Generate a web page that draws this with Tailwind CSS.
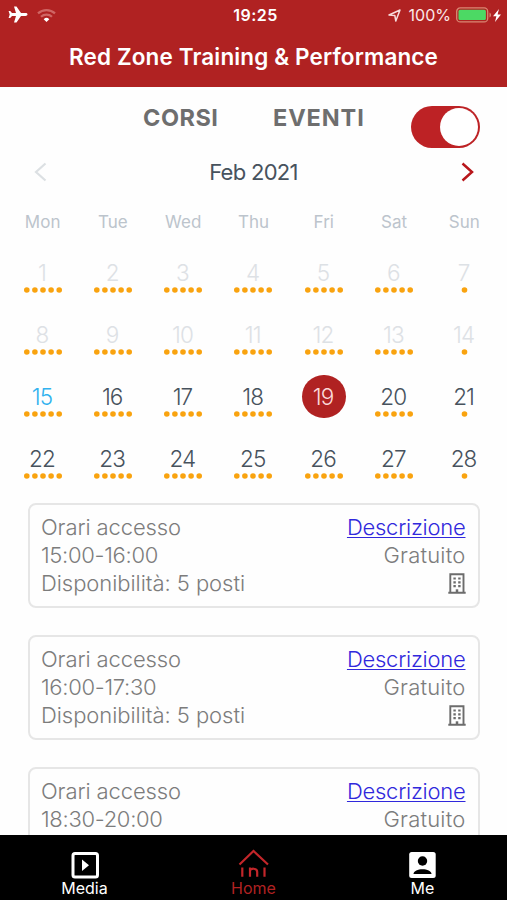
<!DOCTYPE html>
<html lang="it">
<head>
<meta charset="utf-8">
<title>Red Zone Training &amp; Performance</title>
<script src="https://cdn.jsdelivr.net/npm/@tailwindcss/browser@4"></script>
</head>
<body class="bg-white font-['Inter',sans-serif]">
<div class="flex h-[900px] w-[507px] flex-col overflow-hidden bg-[#fefefe]">
  <header class="h-[86.5px] shrink-0 bg-[#b02222] text-white">
    <div class="grid h-[30px] grid-cols-3 items-center pl-2 pr-1.5">
      <div class="flex items-center gap-[9px]">
        <svg class="size-[20px]" viewBox="0 0 20 20" fill="#fff"><path d="M19.500 9.500c0-.9-1-1.400-2-1.400h-4.500L8.500 1.500H6l2 6.600H4L2.200 6H.6L1.700 9.500.6 13h1.600L4 10.900h4L6 17.500h2.500l4.500-6.600h4.500c1 0 2-.5 2-1.400z"/></svg>
        <svg class="h-[15px] w-[19px]" viewBox="0 0 19 15" fill="none" stroke-width="2.200"><path d="M1 5.400a12.500 12.500 0 0 1 17 0M4 8.800a8 8 0 0 1 11 0" stroke="#cf6664"/><path d="M9.500 14 6.700 11.200a4 4 0 0 1 5.600 0z" fill="#fff"/></svg>
      </div>
      <div class="pl-[2px] text-center text-[16px] font-semibold tracking-[0.5px]">19:25</div>
      <div class="flex items-center justify-end">
        <svg class="mr-[8px] size-[13px]" viewBox="0 0 13 13" fill="none" stroke="#f7dcdc" stroke-width="1.500" stroke-linejoin="round"><path d="M1 6 12 1 7.800 12 6.800 6.400z"/></svg>
        <span class="text-[16px] text-[#fbe9e9]">100%</span>
        <svg class="ml-[5px] h-[16px] w-[38px]" viewBox="0 0 38 16"><rect x="-.3" y=".9" width="31" height="14" rx="3.500" transform="translate(-1)" fill="none"/><rect x=".7" y=".9" width="31" height="14" rx="3.500" fill="none" stroke="#d98873" stroke-width="1.300"/><rect x="2.500" y="2.700" width="27.400" height="10.400" rx="1.500" fill="#4cd964"/><path d="M33.500 5.500c2 .8 2 4.200 0 5z" fill="#d98873"/></svg>
        <svg class="-ml-[1px] h-[13px] w-[8px]" viewBox="0 0 8 13" fill="#fff"><path d="M6 0 0 7.300h3.400L2 13l6-7.500H4.600z"/></svg>
      </div>
    </div>
    <h1 class="pt-[9px] text-center text-[22.5px] leading-[36px] font-semibold tracking-[0.14px] whitespace-nowrap">Red Zone Training &amp; Performance</h1>
  </header>

  <main class="flex min-h-0 flex-1 flex-col overflow-hidden">
    <div class="flex h-[63px] shrink-0 pt-[19.500px] pl-[143px] text-[#6e6e6e]">
      <div class="w-[130px] text-[23.500px] leading-[24px] font-bold tracking-[0.5px]">CORSI</div>
      <div class="w-[138px] text-[23.500px] leading-[24px] font-bold tracking-[0.9px]">EVENTI</div>
      <div class="flex h-[42px] w-[69px] shrink-0 items-center justify-end rounded-full bg-[#bd2225] pr-[2.500px]"><div class="size-[38px] rounded-full bg-white"></div></div>
    </div>

    <div class="flex h-[45px] shrink-0 items-center justify-between px-[33px]">
      <svg class="h-[20px] w-[14px]" viewBox="0 0 14 20" fill="none" stroke="#dce0e3" stroke-width="2.200"><path d="M12.500 1.500 3 10l9.500 8.500"/></svg>
      <div class="text-[22px] tracking-[-0.7px] text-[#47525d]">Feb 2021</div>
      <svg class="h-[20px] w-[14px]" viewBox="0 0 14 20" fill="none" stroke="#b8161b" stroke-width="2.500"><path d="M2.500 1.500 12 10l-9.500 8.500"/></svg>
    </div>

    <div class="grid h-[56px] shrink-0 grid-cols-7 items-center px-[7.500px] text-center text-[17px] text-[#bcc4cc]">
      <div>Mon</div><div>Tue</div><div>Wed</div><div>Thu</div><div>Fri</div><div>Sat</div><div>Sun</div>
    </div>
    <div id="days" class="grid shrink-0 auto-rows-[62px] grid-cols-7 px-[7.500px] text-center text-[22.500px] tracking-[-0.9px]"></div>

    <div id="slots" class="mt-[4.500px] flex flex-col gap-[27.500px] px-[27.500px] text-[#7c7c7c]"></div>
  </main>

  <nav class="flex h-[65.500px] shrink-0 bg-black text-[16px] leading-[18px] text-white">
    <div class="flex flex-1 flex-col items-center pt-[17px]">
      <svg class="h-[27px] w-[28px]" viewBox="0 0 28 27"><rect x="2" y="1.500" width="24.500" height="23.500" rx="2" fill="none" stroke="#fff" stroke-width="3"/><path d="M11 7.500v11.500l7-5.700z" fill="#fff"/></svg>
      <span>Media</span>
    </div>
    <div class="flex flex-1 flex-col items-center pt-[12.500px] text-[#b02222]">
      <svg class="h-[31.500px] w-[32px]" viewBox="0 0 32 31.500" fill="none" stroke="#c3262a" stroke-width="2.200"><path d="M1.500 17.500 15.500 4l14.500 13.500"/><path d="M4.300 20.500v9.200M12 29.700v-9.200M12 24c0-3 7.200-3.400 7.200 1v4.700M26.500 20.500v9.200"/></svg>
      <span>Home</span>
    </div>
    <div class="flex flex-1 flex-col items-center pt-[17px]">
      <svg class="h-[27px] w-[28px]" viewBox="0 0 28 27"><rect x=".2" y="0" width="26.500" height="26" rx="2.500" fill="#fff"/><circle cx="13.500" cy="9" r="4.700" fill="#000"/><path d="M4.500 22c0-6.500 18-6.500 18 0z" fill="#000"/></svg>
      <span>Me</span>
    </div>
  </nav>
</div>
<script>
  const dots5 = '<svg class="h-[6px] w-[40px]" viewBox="0 0 40 6" fill="#f9a30f"><circle cx="3.800" cy="3" r="2.800"/><circle cx="11.900" cy="3" r="2.800"/><circle cx="20" cy="3" r="2.800"/><circle cx="28.100" cy="3" r="2.800"/><circle cx="36.200" cy="3" r="2.800"/></svg>';
  const dots1 = '<svg class="h-[6px] w-[40px]" viewBox="0 0 40 6" fill="#f9a30f"><circle cx="20.500" cy="3" r="2.800"/></svg>';
  let cells = '';
  for (let d = 1; d <= 28; d++) {
    const color = d < 15 ? 'text-[#dde1e5]' : d === 15 ? 'text-[#31b2ee]' : d === 19 ? 'text-[#fbdada]' : 'text-[#47525d]';
    const ring = d === 19 ? 'bg-[#b02222]' : '';
    const dots = d === 19 ? '' : d % 7 === 0 ? dots1 : dots5;
    cells += `<div class="flex flex-col items-center"><div class="flex size-[43.500px] shrink-0 items-center justify-center rounded-full pt-[2px] pr-[1.500px] font-light ${color} ${ring}">${d}</div><div class="-mt-[7.500px]">${dots}</div></div>`;
  }
  document.getElementById('days').innerHTML = cells;

  const building = '<svg class="h-[21px] w-[18px]" viewBox="0 0 18 21" fill="none" stroke="#6c6c6c" stroke-width="1.900"><path d="M2.300 19.500V1.300h13.200v18.200M.3 19.700h17.400"/><path d="M5.400 5.500h2.400M10.200 5.500h2.400M5.400 9.300h2.400M10.200 9.300h2.400M5.400 13.100h2.400M10.200 13.100h2.400" stroke-width="2.200"/><path d="M9 16.300v3" stroke-width="2.500"/></svg>';
  const slots = [
    { time: '15:00-16:00', seats: 'Disponibilità: 5 posti' },
    { time: '16:00-17:30', seats: 'Disponibilità: 5 posti' },
    { time: '18:30-20:00', seats: '' },
  ];
  document.getElementById('slots').innerHTML = slots.map(s => `
    <section class="flex h-[104.500px] shrink-0 justify-between rounded-[8px] border-[2.500px] border-[#e6e6e6] pt-[7.500px] pr-[12px] pl-[11.500px] text-[22px] leading-[28.400px] font-light whitespace-nowrap">
      <div><div class="tracking-[-0.1px]">Orari accesso</div><div class="tracking-[-0.3px]">${s.time}</div><div class="tracking-[-0.05px]">${s.seats}</div></div>
      <div class="flex flex-col items-end"><a class="tracking-[-0.25px] text-[#3028dc] underline decoration-1 underline-offset-2">Descrizione</a><div class="tracking-[0.2px]">Gratuito</div><div class="flex h-[28px] items-center">${s.seats ? building : ''}</div></div>
    </section>`).join('');
</script>
</body>
</html>
